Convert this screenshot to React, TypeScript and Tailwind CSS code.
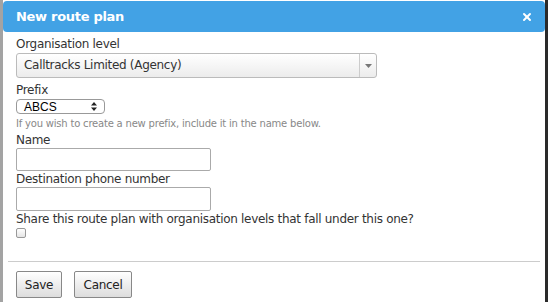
import { X } from "lucide-react";

export default function App() {
  return (
    <div className="w-[548px] h-[307px] bg-white overflow-hidden" style={{ fontFamily: '"DejaVu Sans", sans-serif' }}>
      <div className="h-[302px] border-l-[3px] border-l-[#a3a3a3] border-r-[3px] border-r-[#2a2a2a] flex flex-col">
        {/* header */}
        <div className="shrink-0 mt-[1px] h-[31px] bg-[#42a2e5] rounded-[4px] flex items-center justify-between pl-[13px] pr-[12px]">
          <span className="text-white text-[13px] font-bold tracking-[-0.3px]">New route plan</span>
          <X size={12} strokeWidth={4} className="text-white" />
        </div>

        <div className="shrink-0 px-[13px] pt-[4px] flex flex-col text-[12px] tracking-[-0.3px] text-[#333]">
          <label className="leading-[16px]">Organisation level</label>
          <div className="mt-[1px] w-[361px] h-[25px] border border-[#bbb] rounded-[3px] flex bg-gradient-to-b from-white to-[#ececec]">
            <span className="flex-1 pl-[7px] leading-[23px]">Calltracks Limited (Agency)</span>
            <div className="w-[17px] border-l border-[#ccc] flex items-center justify-center">
              <svg width="7" height="4" viewBox="0 0 7 4"><path d="M0 0h7L3.5 4z" fill="#777" /></svg>
            </div>
          </div>

          <label className="mt-[4px] leading-[16px]">Prefix</label>
          <div className="mt-[1px] w-[89px] h-[15px] border border-[#999] rounded-[4px] bg-white flex items-center justify-between px-[7px] tracking-normal" style={{ fontFamily: '"Liberation Sans", sans-serif' }}>
            <span className="text-[12px] text-black leading-none">ABCS</span>
            <svg width="6" height="9" viewBox="0 0 6 9"><path d="M0 3.5L3 0l3 3.5zM0 5.5L3 9l3-3.5z" fill="#222" /></svg>
          </div>
          <p className="mt-[3px] text-[10px] tracking-[-0.2px] text-[#888] leading-[14px]">If you wish to create a new prefix, include it in the name below.</p>

          <label className="mt-[1px] leading-[16px]">Name</label>
          <input className="w-[195px] h-[23px] border border-[#aaa] rounded-[2px] bg-white" />

          <label className="leading-[16px]">Destination phone number</label>
          <input className="w-[195px] h-[24px] border border-[#aaa] rounded-[2px] bg-white" />

          <label className="leading-[16px]">Share this route plan with organisation levels that fall under this one?</label>
          <div className="mt-[1px] w-[10px] h-[10px] border border-[#999] rounded-[2px] bg-gradient-to-b from-white to-[#e5e5e5]" />
        </div>

        <div className="shrink-0 mt-[23px] mx-[5px] border-t border-[#ccc]" />

        <div className="shrink-0 px-[13px] pt-[9px] flex gap-[12px]">
          <button className="w-[46px] h-[27px] border border-[#888] rounded-[2px] bg-gradient-to-b from-white to-[#ddd] text-[12px] tracking-[-0.3px] text-[#222]">Save</button>
          <button className="w-[58px] h-[27px] border border-[#888] rounded-[2px] bg-gradient-to-b from-white to-[#ddd] text-[12px] tracking-[-0.3px] text-[#222]">Cancel</button>
        </div>
      </div>
    </div>
  );
}
